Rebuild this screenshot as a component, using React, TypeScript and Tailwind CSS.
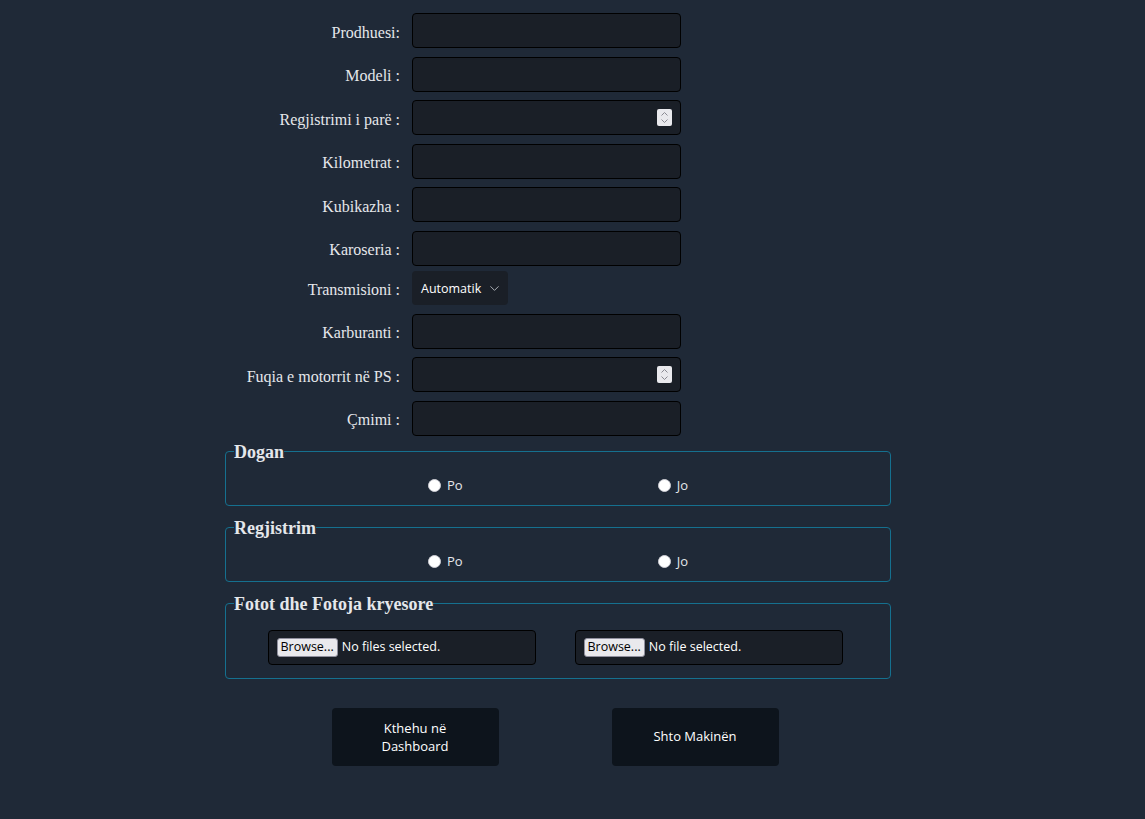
import { ChevronDown } from "lucide-react";

const serif = "font-['Liberation_Serif',serif]";
const sans = "font-['Open_Sans',sans-serif]";

const fields = [
  { label: "Prodhuesi:", kind: "text" },
  { label: "Modeli :", kind: "text" },
  { label: "Regjistrimi i parë :", kind: "number" },
  { label: "Kilometrat :", kind: "text" },
  { label: "Kubikazha :", kind: "text" },
  { label: "Karoseria :", kind: "text" },
  { label: "Transmisioni :", kind: "select" },
  { label: "Karburanti :", kind: "text" },
  { label: "Fuqia e motorrit në PS :", kind: "number" },
  { label: "Çmimi :", kind: "text" },
];

const Spinner = () => (
  <span className="absolute right-[9px] top-[9px] flex h-[17px] w-[15px] flex-col items-center justify-center rounded-[2px] bg-[#e9e9ed]">
    <svg width="9" height="13" viewBox="0 0 9 13" fill="none" stroke="#8a8a92" strokeWidth="1">
      <path d="M1.5 4.5 L4.5 1.5 L7.5 4.5" />
      <path d="M1.5 8.5 L4.5 11.5 L7.5 8.5" />
    </svg>
  </span>
);

const Radio = ({ label }: { label: string }) => (
  <label className={`flex h-[19px] items-center gap-[6px] text-[13px] text-[#e5e7eb] ${sans}`}>
    <span className="h-[13px] w-[13px] rounded-full border border-[#d0d0d7] bg-white" />
    {label}
  </label>
);

const FileBox = ({ text }: { text: string }) => (
  <div className="flex h-[35px] w-[268px] items-center gap-[4px] rounded-[4px] border border-black bg-[#1a1f27] px-[8px]">
    <span className="flex h-[19px] items-center rounded-[3px] border border-[#8f8f9d] bg-[#e9e9ed] px-[3px] font-['Open_Sans',sans-serif] text-[12.5px] text-black">
      Browse...
    </span>
    <span className={`text-[12.5px] text-white ${sans}`}>{text}</span>
  </div>
);

const Legend = ({ children }: { children: string }) => (
  <legend className={`ml-[8px] text-[18px] font-bold leading-[20px] text-[#e5e7eb] ${serif}`}>{children}</legend>
);

export default function App() {
  return (
    <div className="min-h-[819px] w-full bg-[#1f2937] pt-[13px]">
      <div className="ml-[225px] w-[666px]">
        <div className="flex flex-col gap-[8.6px]">
          {fields.map((f) => (
            <div
              key={f.label}
              className={`flex items-center ${f.kind === "select" ? "-mt-[3.6px]" : ""}`}
            >
              <label className={`mt-[4px] w-[175px] text-right text-[16px] text-[#e5e7eb] ${serif}`}>
                {f.label}
              </label>
              <div className="ml-[12px]">
                {f.kind === "select" ? (
                  <div className={`flex h-[34px] w-[96px] items-center gap-[6px] rounded-[4px] bg-[#1a1f27] pl-[9px] pt-[2px] text-[12.5px] text-white ${sans}`}>
                    Automatik
                    <ChevronDown size={15} strokeWidth={1.3} className="text-[#c9cdd3]" />
                  </div>
                ) : (
                  <div className="relative">
                    <input
                      type="text"
                      className="h-[35px] w-[269px] rounded-[4px] border border-black bg-[#1a1f27] px-2 text-white outline-none"
                    />
                    {f.kind === "number" && <Spinner />}
                  </div>
                )}
              </div>
            </div>
          ))}
        </div>

        <fieldset className="mt-[6px] rounded-[4px] border border-[#15708f] pb-[10px] pt-[14px]">
          <Legend>Dogan</Legend>
          <div className="flex justify-center gap-[195px]">
            <Radio label="Po" />
            <Radio label="Jo" />
          </div>
        </fieldset>

        <fieldset className="mt-[12px] rounded-[4px] border border-[#15708f] pb-[10px] pt-[14px]">
          <Legend>Regjistrim</Legend>
          <div className="flex justify-center gap-[195px]">
            <Radio label="Po" />
            <Radio label="Jo" />
          </div>
        </fieldset>

        <fieldset className="mt-[12px] rounded-[4px] border border-[#15708f] pb-[13px] pt-[16px]">
          <Legend>Fotot dhe Fotoja kryesore</Legend>
          <div className="flex justify-center gap-[39px] pr-[6px]">
            <FileBox text="No files selected." />
            <FileBox text="No file selected." />
          </div>
        </fieldset>

        <div className="mt-[29px] flex justify-center gap-[113px] pr-[6px]">
          <button className={`flex h-[58px] w-[167px] items-center justify-center rounded-[4px] bg-[#0d141c] px-10 text-center text-[13px] leading-[18px] text-white ${sans}`}>
            Kthehu në Dashboard
          </button>
          <button className={`flex h-[58px] w-[167px] items-center justify-center rounded-[4px] bg-[#0d141c] text-center text-[13px] text-white ${sans}`}>
            Shto Makinën
          </button>
        </div>
      </div>
    </div>
  );
}
